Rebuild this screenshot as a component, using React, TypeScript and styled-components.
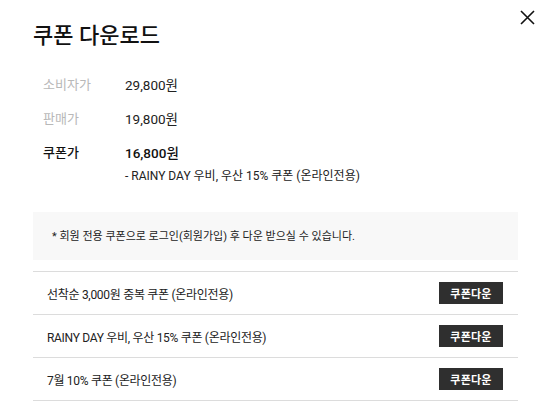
import styled, { createGlobalStyle } from "styled-components";

const GlobalStyle = createGlobalStyle`
  html, body {
    margin: 0;
    padding: 0;
    background: #fff;
  }
  body {
    font-family: "Roboto", "Noto Sans CJK KR", sans-serif;
    color: #222;
  }
`;

const coupons = [
  "선착순 3,000원 중복 쿠폰 (온라인전용)",
  "RAINY DAY 우비, 우산 15% 쿠폰 (온라인전용)",
  "7월 10% 쿠폰 (온라인전용)",
];

export default function App() {
  return (
    <>
      <GlobalStyle />
      <Modal>
        <CloseButton aria-label="닫기">
          <svg width="15" height="15" viewBox="0 0 15 15">
            <path d="M1 1 L14 14 M14 1 L1 14" stroke="#111" strokeWidth="1.6" fill="none" />
          </svg>
        </CloseButton>
        <Title>쿠폰 다운로드</Title>

        <PriceTable>
          <PriceRow>
            <Label>소비자가</Label>
            <Value>29,800원</Value>
          </PriceRow>
          <PriceRow>
            <Label>판매가</Label>
            <Value>19,800원</Value>
          </PriceRow>
          <PriceRow $strong>
            <Label>쿠폰가</Label>
            <div>
              <Value>16,800원</Value>
              <SubNote>- RAINY DAY 우비, 우산 15% 쿠폰 (온라인전용)</SubNote>
            </div>
          </PriceRow>
        </PriceTable>

        <Notice>* 회원 전용 쿠폰으로 로그인(회원가입) 후 다운 받으실 수 있습니다.</Notice>

        <CouponList>
          {coupons.map((name) => (
            <CouponRow key={name}>
              <CouponName>{name}</CouponName>
              <DownloadButton>쿠폰다운</DownloadButton>
            </CouponRow>
          ))}
        </CouponList>
      </Modal>
    </>
  );
}

const Modal = styled.div`
  position: relative;
  width: 552px;
  box-sizing: border-box;
  padding: 22px 34px 0 33px;
`;

const CloseButton = styled.button`
  position: absolute;
  top: 10px;
  right: 17px;
  width: 15px;
  height: 15px;
  padding: 0;
  border: 0;
  background: none;
  cursor: pointer;
  svg {
    display: block;
  }
`;

const Title = styled.h2`
  margin: 0;
  font-size: 22px;
  line-height: 28px;
  font-weight: 500;
  color: #111;
`;

const PriceTable = styled.div`
  margin-top: 25px;
  padding-left: 10px;
`;

const Label = styled.span`
  width: 82px;
  flex-shrink: 0;
  color: #b8b8b8;
`;

const Value = styled.div`
  color: #222;
`;

const PriceRow = styled.div<{ $strong?: boolean }>`
  display: flex;
  font-size: 13px;
  line-height: 20px;
  margin-bottom: 14px;
  &:last-child {
    margin-bottom: 0;
  }
  ${Label} {
    color: ${(p) => (p.$strong ? "#111" : "#b8b8b8")};
    font-weight: ${(p) => (p.$strong ? 500 : 400)};
  }
  ${Value} {
    font-size: 13.5px;
    font-weight: ${(p) => (p.$strong ? 500 : 400)};
    color: ${(p) => (p.$strong ? "#111" : "#222")};
  }
`;

const SubNote = styled.div`
  margin-top: 4px;
  font-size: 12px;
  line-height: 18px;
  color: #222;
`;

const Notice = styled.div`
  margin-top: 27px;
  background: #f8f8f8;
  padding: 17px 19px 15px;
  font-size: 11px;
  line-height: 16px;
  color: #222;
`;

const CouponList = styled.div`
  margin-top: 11px;
  border-bottom: 1px solid #dcdcdc;
`;

const CouponRow = styled.div`
  display: flex;
  align-items: center;
  justify-content: space-between;
  height: 42px;
  border-top: 1px solid #dcdcdc;
  padding: 0 15px 0 14px;
`;

const CouponName = styled.span`
  font-size: 12px;
  color: #222;
  letter-spacing: -0.3px;
`;

const DownloadButton = styled.button`
  width: 64px;
  height: 22px;
  padding: 0;
  border: 0;
  background: #2f2f2f;
  color: #fff;
  font-family: inherit;
  font-size: 11px;
  font-weight: 700;
  letter-spacing: 0.2px;
  cursor: pointer;
`;
